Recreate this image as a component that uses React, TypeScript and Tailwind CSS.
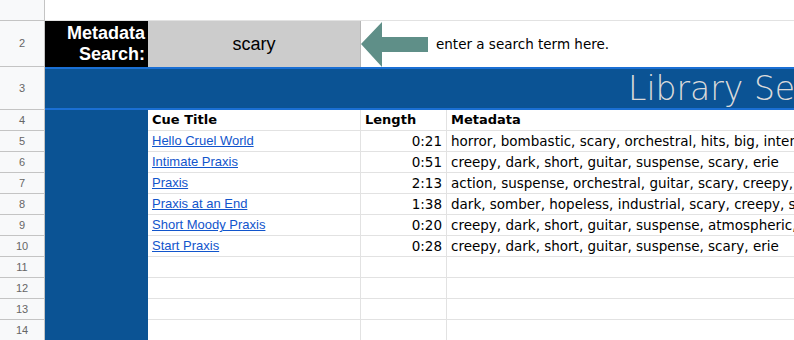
const cues = [
  { title: 'Hello Cruel World', length: '0:21', meta: 'horror, bombastic, scary, orchestral, hits, big, intense, dark' },
  { title: 'Intimate Praxis', length: '0:51', meta: 'creepy, dark, short, guitar, suspense, scary, erie' },
  { title: 'Praxis', length: '2:13', meta: 'action, suspense, orchestral, guitar, scary, creepy, dark' },
  { title: 'Praxis at an End', length: '1:38', meta: 'dark, somber, hopeless, industrial, scary, creepy, short' },
  { title: 'Short Moody Praxis', length: '0:20', meta: 'creepy, dark, short, guitar, suspense, atmospheric, scary' },
  { title: 'Start Praxis', length: '0:28', meta: 'creepy, dark, short, guitar, suspense, scary, erie' },
];

const verdana = { fontFamily: '"DejaVu Sans", Verdana, sans-serif' };
const arial = { fontFamily: '"Liberation Sans", Arial, sans-serif' };

const RowHead = ({ n, h }: { n?: number; h: string }) => (
  <div
    className={`${h} w-[45px] shrink-0 bg-[#f8f9fa] border-r border-b border-[#c4c4c4] flex items-center justify-center text-[11px] text-[#666]`}
    style={arial}
  >
    {n}
  </div>
);

const BackArrow = () => (
  <svg width="68" height="46" viewBox="0 0 68 46" className="shrink-0">
    <polygon points="0,22 21,0 21,15 67,15 67,30 21,30 21,45" fill="#5f8f88" />
  </svg>
);

export default function App() {
  const rows = [...cues, null, null, null, null];
  return (
    <div className="w-[794px] h-[340px] overflow-hidden bg-white">
      {/* row 1 */}
      <div className="flex h-[21px]">
        <RowHead h="h-[21px]" />
        <div className="flex-1 border-b border-[#e2e2e2]" />
      </div>

      {/* row 2 */}
      <div className="flex h-[46px]">
        <RowHead n={2} h="h-[46px]" />
        <div
          className="w-[103px] shrink-0 bg-black text-white font-bold text-[18px] leading-[21px] text-right pr-[3px] flex flex-col justify-center"
          style={arial}
        >
          <span>Metadata</span>
          <span>Search:</span>
        </div>
        <div
          className="w-[213px] shrink-0 bg-[#cccccc] border-r border-[#b7b7b7] flex items-center justify-center text-[18px] text-black"
          style={arial}
        >
          scary
        </div>
        <div className="flex-1 flex items-center pt-[1px]">
          <BackArrow />
          <span className="ml-[7px] text-[13.5px] text-black whitespace-nowrap" style={verdana}>
            enter a search term here.
          </span>
        </div>
      </div>

      {/* row 3 */}
      <div className="flex h-[43px]">
        <RowHead n={3} h="h-[43px]" />
        <div className="flex-1 h-[43px] bg-[#0b5394] border-y-2 border-[#1a6fd4] flex items-center overflow-hidden">
          <span
            className="pl-[583px] text-[33px] leading-none font-extralight text-[#dadada] whitespace-nowrap"
            style={verdana}
          >
            Library Search
          </span>
        </div>
      </div>

      {/* row 4: header */}
      <div className="flex h-[21px]">
        <RowHead n={4} h="h-[21px]" />
        <div className="w-[103px] shrink-0 bg-[#0b5394]" />
        <div className="w-[213px] shrink-0 border-r border-b border-[#e2e2e2] pl-[4px] flex items-center text-[13px] font-bold text-black" style={verdana}>
          Cue Title
        </div>
        <div className="w-[86px] shrink-0 border-r border-b border-[#e2e2e2] pl-[4px] flex items-center text-[13px] font-bold text-black" style={verdana}>
          Length
        </div>
        <div className="flex-1 border-b border-[#e2e2e2] pl-[4px] flex items-center text-[13px] font-bold text-black" style={verdana}>
          Metadata
        </div>
      </div>

      {rows.map((c, i) => (
        <div className="flex h-[21px]" key={i}>
          <RowHead n={i + 5} h="h-[21px]" />
          <div className="w-[103px] shrink-0 bg-[#0b5394]" />
          <div className="w-[213px] shrink-0 border-r border-b border-[#e2e2e2] pl-[4px] flex items-center text-[13px]" style={arial}>
            {c && <a className="text-[#1155cc] underline whitespace-nowrap">{c.title}</a>}
          </div>
          <div className="w-[86px] shrink-0 border-r border-b border-[#e2e2e2] pr-[4px] flex items-center justify-end text-[13.5px] text-black" style={verdana}>
            {c?.length}
          </div>
          <div className="flex-1 min-w-0 border-b border-[#e2e2e2] pl-[4px] flex items-center text-[13.5px] text-black whitespace-nowrap overflow-hidden" style={verdana}>
            {c?.meta}
          </div>
        </div>
      ))}
    </div>
  );
}
